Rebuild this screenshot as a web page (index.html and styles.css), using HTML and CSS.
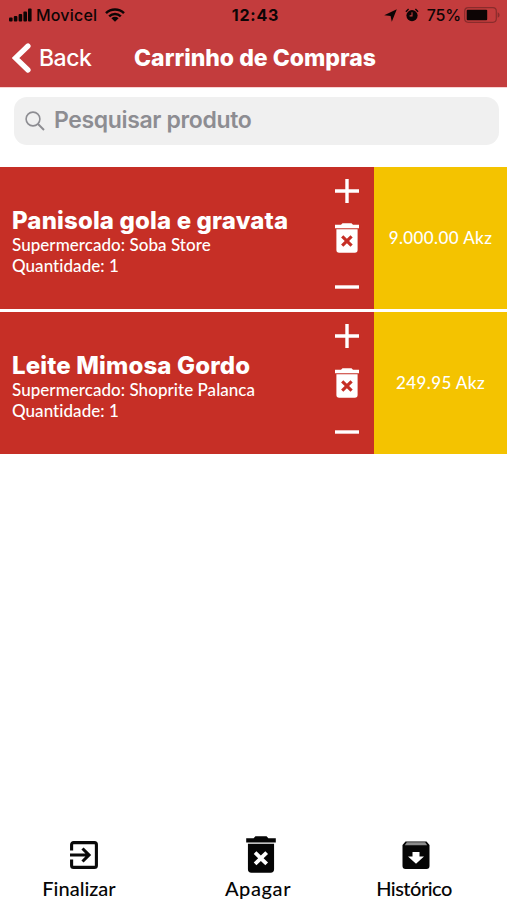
FILE: index.html
```html
<!DOCTYPE html>
<html lang="pt">
<head>
    <meta charset="UTF-8">
    <meta name="viewport" content="width=device-width, initial-scale=1.0">
    <title>Carrinho de Compras</title>
    <link rel="stylesheet" href="styles.css">
</head>
<body>
    <svg class="symbols" width="0" height="0">
        <symbol id="trash" viewBox="0 0 24 30">
            <path d="M0 1.800h6l1.500-1.600h9L18 1.800h6v3.400H0z"/>
            <path fill-rule="evenodd" d="M1.400 6.200h21.200v20.800a2.800 2.800 0 0 1-2.800 2.800H4.200a2.800 2.800 0 0 1-2.800-2.800zM8.300 12.300L6.100 14.500 9.700 18l-3.600 3.500 2.200 2.200 3.600-3.500 3.600 3.500 2.200-2.200L14.100 18l3.600-3.500-2.200-2.200-3.600 3.500z"/>
        </symbol>
    </svg>

    <header class="header">
        <div class="status-bar">
            <div class="status-left">
                <svg class="signal" width="23" height="14" viewBox="0 0 23 14">
                    <rect x="0" y="9.500" width="3.600" height="4" rx="1"/>
                    <rect x="4.800" y="8" width="3.600" height="5.500" rx="1"/>
                    <rect x="9.600" y="6" width="3.600" height="7.500" rx="1"/>
                    <rect x="14.400" y="3.500" width="3.600" height="10" rx="1"/>
                    <rect x="19" y="0.500" width="3.600" height="13" rx="1"/>
                </svg>
                <span class="carrier">Movicel</span>
                <svg class="wifi" width="20" height="14" viewBox="0 0 20 14">
                    <path d="M1 5.200a13 13 0 0 1 18 0M4.200 8.300a8.500 8.500 0 0 1 11.600 0" fill="none" stroke="#0d0505" stroke-width="2.500"/>
                    <path d="M6.400 10.300a5.200 5.200 0 0 1 7.200 0L10 13.800z"/>
                </svg>
            </div>
            <span class="clock">12:43</span>
            <div class="status-right">
                <svg class="location" width="13" height="13" viewBox="0 0 13 13">
                    <path d="M12.800 0.200L7.800 12.800 6.600 6.900 0.200 6.300z"/>
                </svg>
                <svg class="alarm" width="14" height="14" viewBox="0 0 14 14">
                    <circle cx="7" cy="7.600" r="5.600"/>
                    <path d="M0.900 3.700L3.600 1M13.100 3.700L10.400 1" stroke="#0d0505" stroke-width="1.400"/>
                    <path d="M7 4.300v3.600H4.600" fill="none" stroke="#c33c3d" stroke-width="1.100"/>
                </svg>
                <span class="percent">75%</span>
                <svg class="battery" width="36" height="16" viewBox="0 0 36 16">
                    <rect x="0.700" y="0.700" width="31.600" height="14.600" rx="3.500" fill="none" stroke="#8a2c2c" stroke-width="1.200"/>
                    <rect x="2.700" y="2.700" width="20.500" height="10.600" rx="1"/>
                    <path d="M33.700 5.200a3 3 0 0 1 0 5.600z" fill="#8a2c2c"/>
                </svg>
            </div>
        </div>
        <div class="nav-bar">
            <svg class="back-icon" width="19" height="30" viewBox="0 0 19 30">
                <path d="M16 3L3.500 15 16 27" fill="none" stroke="#fff" stroke-width="5.200" stroke-linecap="round" stroke-linejoin="miter"/>
            </svg>
            <span class="back-label">Back</span>
            <h1 class="title">Carrinho de Compras</h1>
        </div>
    </header>

    <div class="search">
        <svg class="search-icon" width="20" height="21" viewBox="0 0 20 21">
            <circle cx="8" cy="8" r="6.900" fill="none" stroke="#8d8d92" stroke-width="1.600"/>
            <path d="M13 13l6 6" stroke="#8d8d92" stroke-width="2"/>
        </svg>
        <span class="placeholder">Pesquisar produto</span>
    </div>

    <main class="cart">
        <div class="item">
            <div class="info">
                <h2 class="name">Panisola gola e gravata</h2>
                <p class="detail">Supermercado: Soba Store</p>
                <p class="detail">Quantidade: 1</p>
            </div>
            <div class="controls">
                <svg width="24" height="24" viewBox="0 0 24 24"><path d="M0 12h24M12 0v24" stroke="#fff" stroke-width="3.400"/></svg>
                <svg class="trash" width="24" height="30"><use href="#trash"/></svg>
                <svg width="24" height="4" viewBox="0 0 24 4"><path d="M0 2h24" stroke="#fff" stroke-width="3.400"/></svg>
            </div>
            <div class="price">9.000.00 Akz</div>
        </div>
        <div class="item">
            <div class="info">
                <h2 class="name">Leite Mimosa Gordo</h2>
                <p class="detail">Supermercado: Shoprite Palanca</p>
                <p class="detail">Quantidade: 1</p>
            </div>
            <div class="controls">
                <svg width="24" height="24" viewBox="0 0 24 24"><path d="M0 12h24M12 0v24" stroke="#fff" stroke-width="3.400"/></svg>
                <svg class="trash" width="24" height="30"><use href="#trash"/></svg>
                <svg width="24" height="4" viewBox="0 0 24 4"><path d="M0 2h24" stroke="#fff" stroke-width="3.400"/></svg>
            </div>
            <div class="price">249.95 Akz</div>
        </div>
    </main>

    <footer class="toolbar">
        <div class="action finish">
            <svg class="icon" width="28" height="28" viewBox="0 0 28 28">
                <path d="M1.600 9.500V3.600a2 2 0 0 1 2-2h20.800a2 2 0 0 1 2 2v20.800a2 2 0 0 1-2 2H3.600a2 2 0 0 1-2-2v-6M0 14h18.500M12.500 7.500L19 14l-6.500 6.500" fill="none" stroke="#0a0a0a" stroke-width="3.100"/>
            </svg>
            <span class="label">Finalizar</span>
        </div>
        <div class="action delete">
            <svg class="icon" width="30" height="37"><use href="#trash"/></svg>
            <span class="label">Apagar</span>
        </div>
        <div class="action history">
            <svg class="icon" width="28" height="28" viewBox="0 0 28 28">
                <path d="M3.500 0.500h21L27.500 4v21a3 3 0 0 1-3 3h-21a3 3 0 0 1-3-3V4z"/>
                <path d="M4.800 1.200h18.400l2 3H2.800z" fill="#8c8c8c"/>
                <path d="M10.500 11h7v4.500h4.500L14 22.800 6 15.500h4.500z" fill="#fff"/>
            </svg>
            <span class="label">Histórico</span>
        </div>
    </footer>
</body>
</html>
```
FILE: styles.css
```css
* {
    box-sizing: border-box;
}
body {
    margin: 0;
    height: 900px;
    display: flex;
    flex-direction: column;
    overflow: hidden;
    background: white;
    font-family: Inter, "Liberation Sans", sans-serif;
}
h1, h2, p {
    margin: 0;
}
svg {
    display: block;
    flex-shrink: 0;
}
.symbols {
    position: absolute;
}
.header {
    height: 88px;
    background: #c33c3d;
    border-bottom: 1px solid #f9d3d3;
}
.status-bar {
    display: grid;
    grid-template-columns: 1fr auto 1fr;
    align-items: center;
    height: 30px;
    padding: 0 7px 0 9px;
    color: #0d0505;
    fill: #0d0505;
    font-size: 16px;
}
.status-left, .status-right {
    display: flex;
    align-items: center;
}
.status-right {
    justify-content: flex-end;
}
.carrier {
    margin: 0 8px 0 4px;
    font-weight: 500;
    letter-spacing: 0.2px;
}
.clock {
    margin-left: 2px;
    font-weight: 700;
    letter-spacing: 0.8px;
}
.alarm {
    margin: 0 8px 0 8px;
}
.percent {
    margin-right: 3px;
    font-weight: 500;
    letter-spacing: -0.2px;
}
.nav-bar {
    display: flex;
    align-items: center;
    height: 56px;
    padding-left: 12px;
    color: white;
}
.back-label {
    width: 52px;
    margin: 0 43px 0 8px;
    font-size: 23px;
    font-weight: 500;
    letter-spacing: -0.5px;
}
.title {
    font-size: 23px;
    font-weight: 800;
    letter-spacing: 0;
    white-space: nowrap;
}
.search {
    display: flex;
    align-items: center;
    height: 48px;
    margin: 9px 8px 22px 14px;
    padding-left: 11px;
    border-radius: 13px;
    background: #f0f0f0;
}
.placeholder {
    margin: -2px 0 0 9px;
    color: #8d8d92;
    font-size: 23px;
    font-weight: 600;
    letter-spacing: -0.36px;
}
.item {
    display: flex;
    height: 142px;
    margin-bottom: 3px;
    background: #c62f26;
    color: white;
    fill: white;
}
.info {
    flex: 1;
    padding: 39px 0 0 12px;
    white-space: nowrap;
}
.name {
    font-size: 24px;
    line-height: 29px;
    margin-bottom: -1px;
    font-weight: 800;
    letter-spacing: 0.15px;
}
.detail {
    font-family: Lato, "Open Sans", sans-serif;
    font-size: 17px;
    line-height: 21px;
    font-weight: 500;
    letter-spacing: 0.05px;
}
.controls {
    width: 39px;
    padding-top: 12px;
}
.trash {
    margin: 20px 0 32px;
}
.price {
    display: flex;
    align-items: center;
    justify-content: center;
    width: 133px;
    padding-bottom: 2px;
    background: #f4c300;
    font-family: Lato, "Open Sans", sans-serif;
    font-size: 17px;
    font-weight: 500;
    letter-spacing: 0.4px;
}
.toolbar {
    display: flex;
    align-items: flex-end;
    margin-top: auto;
    height: 66px;
    fill: #050505;
    color: #050505;
}
.action {
    display: flex;
    flex-direction: column;
    align-items: center;
}
/* icons sit slightly right of their labels */
.icon {
    margin-bottom: 7px;
}
.finish {
    width: 80px;
    margin-left: 39px;
}
.finish .icon {
    margin-left: 10px;
}
.delete {
    width: 80px;
    margin-left: 99px;
}
.delete .icon {
    margin: 0 0 3px 5px;
}
.history {
    width: 80px;
    margin-left: 76px;
}
.history .icon {
    margin-left: 3px;
}
.label {
    font-family: Lato, "Open Sans", sans-serif;
    font-size: 20px;
    line-height: 24px;
    font-weight: 500;
}
.delete .label {
    letter-spacing: 0.6px;
}
.history .label {
    letter-spacing: -0.5px;
}
```
